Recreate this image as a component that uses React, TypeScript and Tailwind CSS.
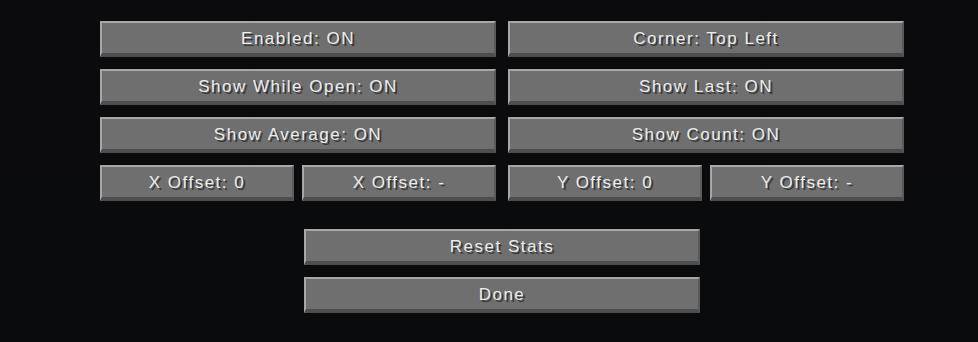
const ROWS: [string, string][] = [
  ['Enabled: ON', 'Corner: Top Left'],
  ['Show While Open: ON', 'Show Last: ON'],
  ['Show Average: ON', 'Show Count: ON'],
]

const OFFSETS = ['X Offset: 0', 'X Offset: -', 'Y Offset: 0', 'Y Offset: -']

function McButton({ label, className = '' }: { label: string; className?: string }) {
  return (
    <div
      className={`h-[36px] flex items-center justify-center bg-[#6f6f6f] border-t-2 border-l-2 border-t-[#a7a7a7] border-l-[#a7a7a7] border-r-2 border-r-[#5b5b5b] border-b-4 border-b-[#4e4e4e] text-[#ececec] text-[17px] leading-none tracking-[1.5px] [text-shadow:2px_2px_0_#383838] ${className}`}
      style={{ fontFamily: '"Liberation Sans", Arial, sans-serif' }}
    >
      {label}
    </div>
  )
}

export default function App() {
  return (
    <div className="w-[978px] h-[342px] bg-gradient-to-b from-[#0b0b0d] to-[#0a0b0c] overflow-hidden">
      <div className="ml-[100px] w-[804px] pt-[21px] flex flex-col">
        {/* option grid */}
        <div className="grid grid-cols-2 gap-x-3 gap-y-3">
          {ROWS.flat().map(l => (
            <McButton key={l} label={l} />
          ))}
          <div className="grid grid-cols-2 gap-2">
            <McButton label={OFFSETS[0]} />
            <McButton label={OFFSETS[1]} />
          </div>
          <div className="grid grid-cols-2 gap-2">
            <McButton label={OFFSETS[2]} />
            <McButton label={OFFSETS[3]} />
          </div>
        </div>

        {/* bottom actions */}
        <div className="mt-[28px] flex flex-col gap-3 items-center">
          <McButton label="Reset Stats" className="w-[396px]" />
          <McButton label="Done" className="w-[396px]" />
        </div>
      </div>
    </div>
  )
}
